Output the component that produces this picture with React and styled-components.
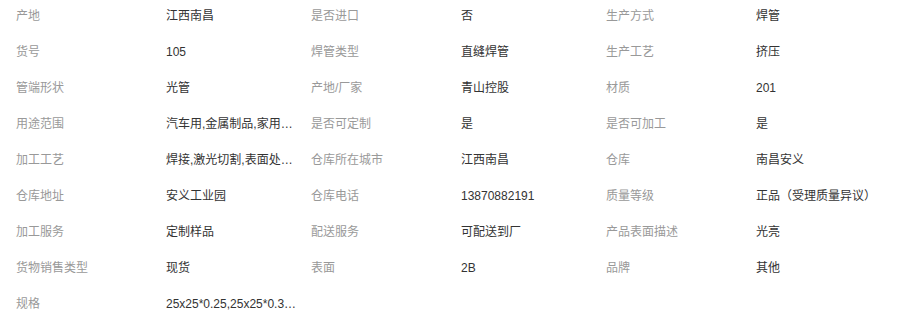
import React from 'react'
import styled, { createGlobalStyle } from "styled-components"

const GlobalStyle = createGlobalStyle`
    body{
        margin: 0;
        background-color: #fff;
        font-family: "Liberation Sans", "Noto Sans CJK SC", sans-serif;
    }
`

const Container = styled.div`
    display: grid;
    grid-template-columns: repeat(3, 295px);
    padding-left: 16px;
    width: 885px;
`

const Item = styled.div`
    display: flex;
    height: 32px;
    line-height: 32px;
    padding-bottom: 4px;
    font-size: 12px;
`

const Label = styled.div`
    width: 150px;
    flex-shrink: 0;
    color: #999;
`

const Value = styled.div`
    width: 131px;
    color: #333;
    white-space: nowrap;
    overflow: hidden;
    text-overflow: ellipsis;
`

const params = [
    ["产地", "江西南昌"],
    ["是否进口", "否"],
    ["生产方式", "焊管"],
    ["货号", "105"],
    ["焊管类型", "直缝焊管"],
    ["生产工艺", "挤压"],
    ["管端形状", "光管"],
    ["产地/厂家", "青山控股"],
    ["材质", "201"],
    ["用途范围", "汽车用,金属制品,家用电器,建筑装饰"],
    ["是否可定制", "是"],
    ["是否可加工", "是"],
    ["加工工艺", "焊接,激光切割,表面处理,折弯"],
    ["仓库所在城市", "江西南昌"],
    ["仓库", "南昌安义"],
    ["仓库地址", "安义工业园"],
    ["仓库电话", "13870882191"],
    ["质量等级", "正品（受理质量异议）"],
    ["加工服务", "定制样品"],
    ["配送服务", "可配送到厂"],
    ["产品表面描述", "光亮"],
    ["货物销售类型", "现货"],
    ["表面", "2B"],
    ["品牌", "其他"],
    ["规格", "25x25*0.25,25x25*0.3,25x25*0.4"],
]

const App = () => {
    return (
        <>
            <GlobalStyle />
            <Container>
                {params.map(([label, value]) => (
                    <Item key={label}>
                        <Label>{label}</Label>
                        <Value>{value}</Value>
                    </Item>
                ))}
            </Container>
        </>
    )
}

export default App
